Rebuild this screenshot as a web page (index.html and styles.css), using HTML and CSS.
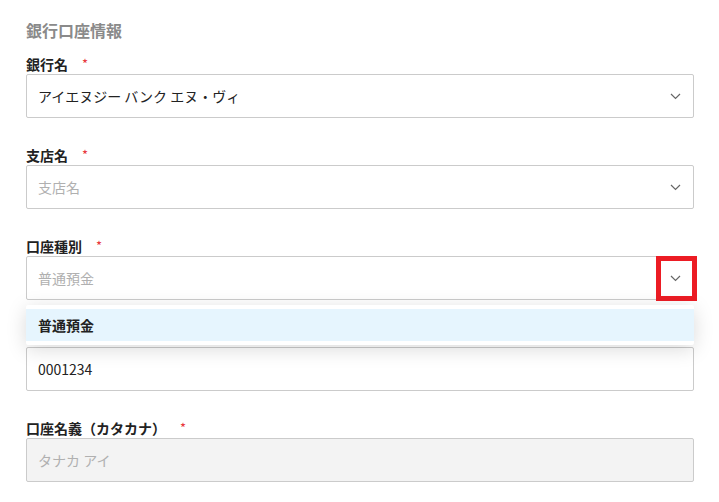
FILE: index.html
```html
<!DOCTYPE html>
<html lang="ja">
<head>
<meta charset="utf-8">
<link rel="stylesheet" href="styles.css">
</head>
<body>
<div class="page">
  <h2 class="title">銀行口座情報</h2>

  <div class="group">
    <div class="label">銀行名<span class="req">*</span></div>
    <div class="field">
      <span class="value">アイエヌジー バンク エヌ・ヴィ</span>
      <svg class="chev" width="11" height="7" viewBox="0 0 11 7"><path d="M1 1 L5.5 5.5 L10 1" fill="none" stroke="#666" stroke-width="1.2"/></svg>
    </div>
  </div>

  <div class="group">
    <div class="label">支店名<span class="req">*</span></div>
    <div class="field">
      <span class="placeholder">支店名</span>
      <svg class="chev" width="11" height="7" viewBox="0 0 11 7"><path d="M1 1 L5.5 5.5 L10 1" fill="none" stroke="#666" stroke-width="1.2"/></svg>
    </div>
  </div>

  <div class="group open">
    <div class="label">口座種別<span class="req">*</span></div>
    <div class="field">
      <span class="placeholder">普通預金</span>
      <svg class="chev" width="11" height="7" viewBox="0 0 11 7"><path d="M1 1 L5.5 5.5 L10 1" fill="none" stroke="#666" stroke-width="1.2"/></svg>
      <div class="highlight-box"></div>
      <div class="menu">
        <div class="option active">普通預金</div>
      </div>
    </div>
  </div>

  <div class="group">
    <div class="label covered">口座番号<span class="req">*</span></div>
    <div class="field">
      <span class="value">0001234</span>
    </div>
  </div>

  <div class="group">
    <div class="label">口座名義（カタカナ）<span class="req">*</span></div>
    <div class="field disabled">
      <span class="placeholder">タナカ アイ</span>
    </div>
  </div>
</div>
</body>
</html>
```

FILE: styles.css
```css
* { box-sizing: border-box; }
html, body { margin: 0; padding: 0; background: #fff; }
body {
  font-family: "Noto Sans CJK JP", "Noto Sans", sans-serif;
  color: #222;
}
.page {
  padding: 18px 25px 0 26px;
}
.title {
  margin: 0 0 12px 0;
  font-size: 16px;
  line-height: 24px;
  font-weight: 700;
  color: #8a8a8a;
}
.group {
  margin-bottom: 27px;
}
.label {
  display: flex;
  align-items: center;
  height: 20px;
  font-size: 14px;
  line-height: 20px;
  font-weight: 700;
  color: #222;
}
.label.covered {
  visibility: hidden;
}
.req {
  color: #e8363c;
  font-weight: 400;
  font-size: 13px;
  line-height: 20px;
  margin-left: 14px;
}
.field {
  position: relative;
  height: 44px;
  border: 1px solid #cbcbcb;
  border-radius: 2px;
  background: #fff;
  display: flex;
  align-items: center;
  justify-content: space-between;
  padding: 0 12px 0 11px;
  font-size: 14px;
}
.field.disabled {
  background: #f3f3f3;
}
.value { color: #222; }
.placeholder { color: #b0b0b0; }
.chev { display: block; margin-top: 1px; }
.highlight-box {
  position: absolute;
  top: -1px;
  right: -4px;
  width: 41px;
  height: 45px;
  border: 5px solid #ec1c24;
}
.menu {
  position: absolute;
  left: -1px;
  right: -1px;
  top: 48px;
  z-index: 5;
  background: #fff;
  padding: 4px 0 4px 0;
  border-radius: 2px;
  box-shadow: 0 4px 20px rgba(0, 0, 0, 0.15);
}
.option {
  height: 32px;
  line-height: 32px;
  padding-left: 12px;
  font-size: 14px;
  font-weight: 700;
  color: #222;
}
.option.active {
  background: #e6f5fe;
}
```
